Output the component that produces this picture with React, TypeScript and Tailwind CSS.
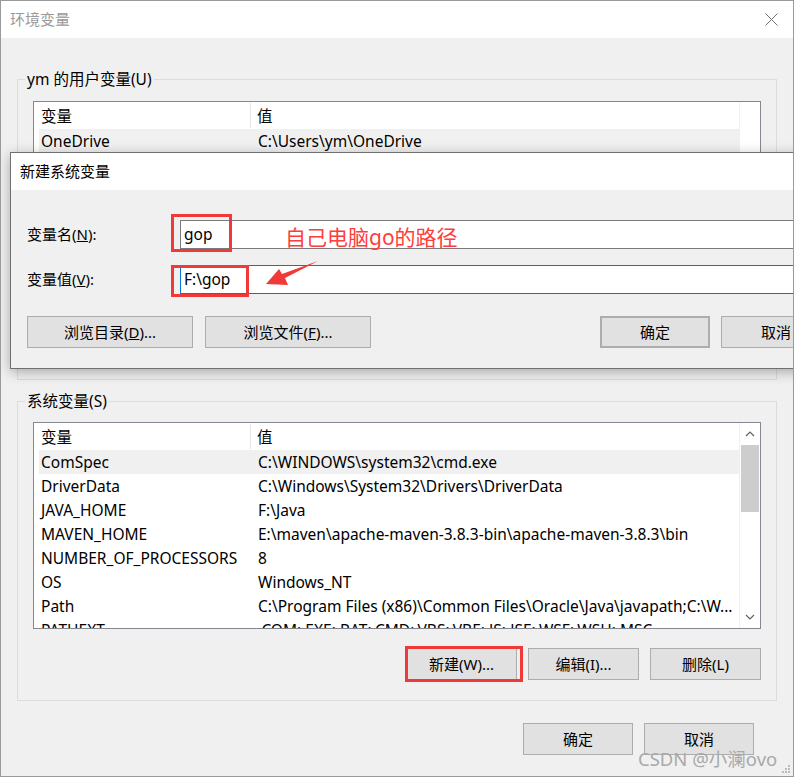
const font = { fontFamily: '"Noto Sans", "Noto Sans CJK SC", sans-serif' };

type Row = [string, string];

const userRows: Row[] = [
  ["OneDrive", "C:\\Users\\ym\\OneDrive"],
  ["Path", "C:\\Users\\ym\\AppData\\Local\\Microsoft\\WindowsApps;"],
  ["TEMP", "C:\\Users\\ym\\AppData\\Local\\Temp"],
  ["TMP", "C:\\Users\\ym\\AppData\\Local\\Temp"],
];

const sysRows: Row[] = [
  ["ComSpec", "C:\\WINDOWS\\system32\\cmd.exe"],
  ["DriverData", "C:\\Windows\\System32\\Drivers\\DriverData"],
  ["JAVA_HOME", "F:\\Java"],
  ["MAVEN_HOME", "E:\\maven\\apache-maven-3.8.3-bin\\apache-maven-3.8.3\\bin"],
  ["NUMBER_OF_PROCESSORS", "8"],
  ["OS", "Windows_NT"],
  ["Path", "C:\\Program Files (x86)\\Common Files\\Oracle\\Java\\javapath;C:\\W..."],
  ["PATHEXT", ".COM;.EXE;.BAT;.CMD;.VBS;.VBE;.JS;.JSE;.WSF;.WSH;.MSC"],
];

function Btn({ children, w = "w-[111px]", className = "" }: { children: React.ReactNode; w?: string; className?: string }) {
  return (
    <div
      className={`${w} h-[32px] flex items-center justify-center bg-[#e1e1e1] border border-[#adadad] text-[15px] text-black ${className}`}
    >
      {children}
    </div>
  );
}

function VarList({ rows, scroll }: { rows: Row[]; scroll: boolean }) {
  return (
    <div className="w-[728px] h-[207px] border border-[#828790] bg-white flex overflow-hidden">
      <div className="flex-1 pl-[5px] overflow-hidden">
        <div className="h-[27px] flex items-center text-[15.5px] text-black">
          <div className="w-[212px] h-[25px] flex items-center pl-[2px] pt-[3px] border-r border-[#e5e5e5]">变量</div>
          <div className="pl-[6px] pt-[3px]">值</div>
        </div>
        {rows.map(([k, v], i) => (
          <div
            key={k + i}
            className={`h-[24px] flex items-center pt-[1px] text-[15.5px] text-black whitespace-nowrap ${i === 0 ? "bg-[#f0f0f0]" : ""}`}
          >
            <div className="w-[219px] shrink-0 pl-[2px]">{k}</div>
            <div>{v}</div>
          </div>
        ))}
      </div>
      <div className="w-[21px] h-full flex flex-col bg-white border-l border-[#f0f0f0]">
        {scroll && (
          <>
            <div className="h-[22px] flex items-center justify-center">
              <svg width="10" height="6" viewBox="0 0 10 6">
                <path d="M1 5 L5 1 L9 5" fill="none" stroke="#606060" strokeWidth="1.2" />
              </svg>
            </div>
            <div className="mx-[1px] h-[67px] bg-[#cdcdcd]" />
            <div className="flex-1" />
            <div className="h-[22px] flex items-center justify-center">
              <svg width="10" height="6" viewBox="0 0 10 6">
                <path d="M1 1 L5 5 L9 1" fill="none" stroke="#606060" strokeWidth="1.2" />
              </svg>
            </div>
          </>
        )}
      </div>
    </div>
  );
}

function Group({
  title,
  rows,
  scroll,
  buttons,
  pt,
}: {
  title: string;
  rows: Row[];
  scroll: boolean;
  buttons: string[];
  pt: string;
}) {
  return (
    <div className={`relative mx-[16px] border border-[#dcdcdc] px-[15px] ${pt} pb-[20px]`}>
      <span className="absolute -top-[11px] left-[7px] px-[2px] bg-[#f0f0f0] text-[15.5px] leading-[20px] text-black">
        {title}
      </span>
      <VarList rows={rows} scroll={scroll} />
      <div className="mt-[19px] flex justify-end gap-[11px]">
        {buttons.map((b) => (
          <Btn key={b}>{b}</Btn>
        ))}
      </div>
    </div>
  );
}

export default function App() {
  return (
    <div className="relative w-[794px] h-[777px] overflow-hidden border border-[#9a9a9a] bg-[#f0f0f0]" style={font}>
      {/* title bar */}
      <div className="h-[37px] bg-white flex items-center justify-between pl-[9px] pr-[15px]">
        <span className="text-[15px] text-[#9a9a9a]">环境变量</span>
        <svg width="13" height="13" viewBox="0 0 13 13">
          <path d="M0.5 0.5 L12.5 12.5 M12.5 0.5 L0.5 12.5" stroke="#707070" strokeWidth="1" />
        </svg>
      </div>

      <div className="mt-[41px]">
        <Group
          title="ym 的用户变量(U)"
          rows={userRows}
          scroll={false}
          buttons={["新建(N)...", "编辑(E)...", "删除(D)"]}
          pt="pt-[21px]"
        />
      </div>
      <div className="mt-[21px]">
        <Group
          title="系统变量(S)"
          rows={sysRows}
          scroll={true}
          buttons={["新建(W)...", "编辑(I)...", "删除(L)"]}
          pt="pt-[20px]"
        />
      </div>

      <div className="mt-[22px] flex justify-end gap-[11px] pr-[39px]">
        <Btn w="w-[110px]">确定</Btn>
        <Btn w="w-[110px]">取消</Btn>
      </div>

      {/* 新建系统变量 dialog */}
      <div className="absolute left-[9px] top-[151px] w-[834px] border border-[#6f6f6f] bg-[#f0f0f0] shadow-[0_3px_12px_rgba(0,0,0,0.3)]">
        <div className="h-[37px] bg-white flex items-center pl-[9px] text-[15px] text-black">新建系统变量</div>
        <div className="pl-[16px] pr-[12px] pt-[30px] pb-[20px]">
          <div className="flex items-center">
            <div className="w-[153px] text-[15px] text-black">
              变量名(<span className="underline">N</span>):
            </div>
            <div className="flex-1 h-[29px] bg-white border border-[#7a7a7a] flex items-center pl-[3px] text-[15.5px] text-black">
              gop
            </div>
          </div>
          <div className="mt-[16px] flex items-center">
            <div className="w-[153px] text-[15px] text-black">
              变量值(<span className="underline">V</span>):
            </div>
            <div className="flex-1 h-[29px] bg-white border border-[#0078d7] flex items-center pl-[3px] text-[15.5px] text-black">
              F:\gop
            </div>
          </div>
          <div className="mt-[22px] flex items-center">
            <Btn w="w-[166px]">
              浏览目录(<span className="underline">D</span>)...
            </Btn>
            <Btn w="w-[166px]" className="ml-[12px]">
              浏览文件(<span className="underline">F</span>)...
            </Btn>
            <div className="flex-1" />
            <Btn w="w-[110px]" className="border-2 border-[#0078d7]">
              确定
            </Btn>
            <Btn w="w-[110px]" className="ml-[11px]">
              取消
            </Btn>
          </div>
        </div>
      </div>

      {/* red annotations */}
      <div className="absolute left-[170px] top-[213px] w-[61px] h-[38px] border-[3px] border-[#f03a3a]" />
      <div className="absolute left-[170px] top-[264px] w-[78px] h-[32px] border-[3px] border-[#f03a3a]" />
      <div className="absolute left-[404px] top-[645px] w-[118px] h-[36px] border-[3px] border-[#f03a3a]" />
      <span className="absolute left-[284px] top-[222px] text-[21px] leading-[28px] text-[#ff3d3d]">自己电脑go的路径</span>
      <svg className="absolute left-0 top-0 pointer-events-none" width="794" height="777">
        <polygon points="265,283 278,268 281,273 317,260 284,277 287,284" fill="#f03a3a" />
      </svg>

      {/* watermark + grip */}
      <span className="absolute left-[637px] top-[744px] text-[18.5px] text-[#a9a9a9]">CSDN @小澜ovo</span>
      <svg className="absolute right-[2px] bottom-[2px]" width="10" height="10" viewBox="0 0 10 10">
        <rect x="7" y="1" width="2" height="2" fill="#bcbcbc" />
        <rect x="4" y="4" width="2" height="2" fill="#bcbcbc" />
        <rect x="7" y="4" width="2" height="2" fill="#bcbcbc" />
        <rect x="1" y="7" width="2" height="2" fill="#bcbcbc" />
        <rect x="4" y="7" width="2" height="2" fill="#bcbcbc" />
        <rect x="7" y="7" width="2" height="2" fill="#bcbcbc" />
      </svg>
    </div>
  );
}
